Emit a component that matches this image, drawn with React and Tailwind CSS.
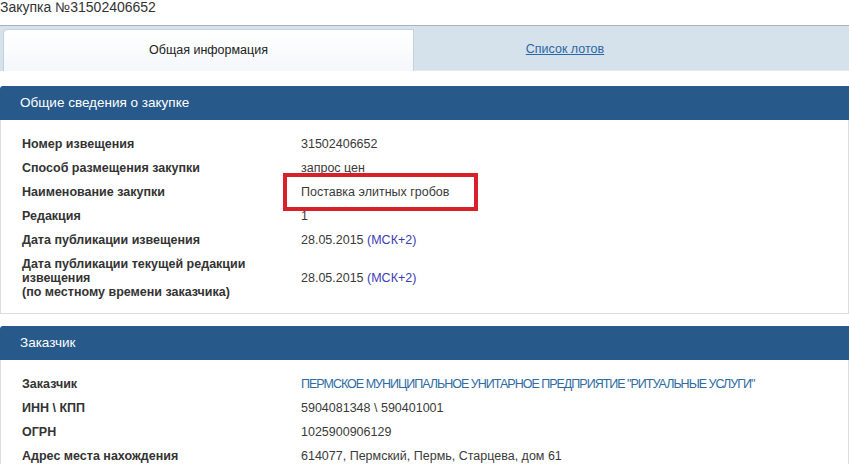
const general = [
  { label: "Номер извещения", value: "31502406652" },
  { label: "Способ размещения закупки", value: "запрос цен" },
  { label: "Наименование закупки", value: "Поставка элитных гробов", marked: true },
  { label: "Редакция", value: "1" },
  { label: "Дата публикации извещения", value: "28.05.2015", tz: true },
  {
    label: ["Дата публикации текущей редакции", "извещения", "(по местному времени заказчика)"],
    value: "28.05.2015",
    tz: true,
  },
];

const customer = [
  { label: "Заказчик", value: "ПЕРМСКОЕ МУНИЦИПАЛЬНОЕ УНИТАРНОЕ ПРЕДПРИЯТИЕ \"РИТУАЛЬНЫЕ УСЛУГИ\"", link: true },
  { label: "ИНН \\ КПП", value: "5904081348 \\ 590401001" },
  { label: "ОГРН", value: "1025900906129" },
  { label: "Адрес места нахождения", value: "614077, Пермский, Пермь, Старцева, дом 61" },
];

function Row({ row }) {
  const lines = Array.isArray(row.label) ? row.label : [row.label];
  return (
    <div className="flex items-center py-[5px] leading-[14px]">
      <div className="w-[300px] shrink-0 pl-[21px] font-bold text-[#333]">
        {lines.map((l) => (
          <div key={l}>{l}</div>
        ))}
      </div>
      <div className="relative">
        <span className={row.link ? "tracking-[-1px] text-[#2e6ba3]" : "text-[#3a3a3a]"}>{row.value}</span>
        {row.tz && <span className="text-[#3b3bb3]"> (МСК+2)</span>}
        {row.marked && (
          <div className="absolute left-[-18px] top-[-12px] h-[38px] w-[195px] border-4 border-[#d8202b]" />
        )}
      </div>
    </div>
  );
}

function Section({ title, rows }) {
  return (
    <div>
      <div className="flex h-[34px] items-center rounded-tl-[3px] bg-[#27598a] pl-[20px] text-[13.5px] text-white">
        {title}
      </div>
      <div className="border border-t-0 border-[#dcdcdc] pb-[9px] pt-[12px]">
        {rows.map((r, i) => (
          <Row key={i} row={r} />
        ))}
      </div>
    </div>
  );
}

export default function App() {
  return (
    <div className="w-[849px] h-[464px] overflow-hidden bg-white font-['Liberation_Sans',sans-serif] text-[12.5px] text-[#333]">
      <div className="h-[25px] text-[14px] leading-[15px] text-[#333]">Закупка №31502406652</div>

      {/* tabs */}
      <div className="flex h-[46px] border-t border-[#a9b3bb] bg-[#d5e2ec] pl-[3px] pt-[3px]">
        <div className="flex w-[411px] items-center justify-center rounded-tl-[5px] border border-b-0 border-[#c5d0da] bg-gradient-to-b from-white to-[#f4f8fb] text-[#222]">
          Общая информация
        </div>
        <div className="flex w-[302px] items-center justify-center border-b border-[#e4ebf1]">
          <a href="#" className="text-[#2a67a3] underline">Список лотов</a>
        </div>
        <div className="flex-1 border-b border-[#e4ebf1]" />
      </div>

      <div className="h-[15px]" />
      <Section title="Общие сведения о закупке" rows={general} />
      <div className="h-[12px]" />
      <Section title="Заказчик" rows={customer} />
    </div>
  );
}
